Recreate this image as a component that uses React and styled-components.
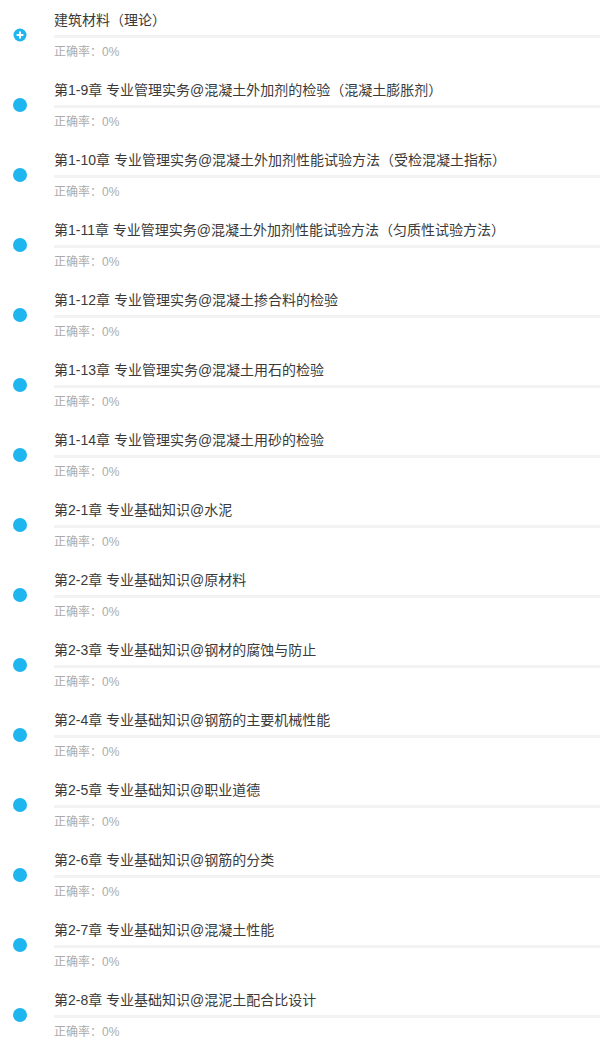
import React from 'react';
import styled, {createGlobalStyle} from 'styled-components';

const GlobalStyle = createGlobalStyle`
    body {
        margin: 0;
        background: #fff;
        font-family: "Liberation Sans", "Noto Sans CJK SC", sans-serif;
    }
`;

const accent = '#1fb5ef';

const chapters = [
    '第1-9章 专业管理实务@混凝土外加剂的检验（混凝土膨胀剂）',
    '第1-10章 专业管理实务@混凝土外加剂性能试验方法（受检混凝土指标）',
    '第1-11章 专业管理实务@混凝土外加剂性能试验方法（匀质性试验方法）',
    '第1-12章 专业管理实务@混凝土掺合料的检验',
    '第1-13章 专业管理实务@混凝土用石的检验',
    '第1-14章 专业管理实务@混凝土用砂的检验',
    '第2-1章 专业基础知识@水泥',
    '第2-2章 专业基础知识@原材料',
    '第2-3章 专业基础知识@钢材的腐蚀与防止',
    '第2-4章 专业基础知识@钢筋的主要机械性能',
    '第2-5章 专业基础知识@职业道德',
    '第2-6章 专业基础知识@钢筋的分类',
    '第2-7章 专业基础知识@混凝土性能',
    '第2-8章 专业基础知识@混泥土配合比设计',
];

const List = styled.div`
    display: flex;
    flex-direction: column;
`;

const Row = styled.div`
    display: flex;
    align-items: flex-start;
    height: 70px;
    padding-top: 10px;
    box-sizing: border-box;
`;

const Marker = styled.div`
    width: 54px;
    height: 50px;
    flex-shrink: 0;
    display: flex;
    align-items: center;
    justify-content: center;
    padding-right: 14px;
    box-sizing: border-box;
`;

const Dot = styled.span`
    width: 14px;
    height: 14px;
    border-radius: 50%;
    background: ${accent};
`;

const Body = styled.div`
    flex: 1 1 auto;
    display: flex;
    flex-direction: column;
`;

const Title = styled.div`
    font-size: 14px;
    line-height: 20px;
    color: #3a3a3a;
    white-space: nowrap;
    padding-bottom: 5px;
    border-bottom: 3px solid #f3f3f3;
`;

const Rate = styled.div`
    font-size: 12px;
    line-height: 20px;
    color: #ababab;
    padding-top: 4px;
`;

const PlusDot = () => (
    <svg width="14" height="14" viewBox="0 0 14 14">
        <circle cx="7" cy="7" r="6.5" fill={accent}/>
        <path d="M7 3.6v6.8M3.6 7h6.8" stroke="#fff" strokeWidth="2"/>
    </svg>
);

const Item = ({title, root}) => (
    <Row>
        <Marker>{root ? <PlusDot/> : <Dot/>}</Marker>
        <Body>
            <Title>{title}</Title>
            <Rate>正确率：0%</Rate>
        </Body>
    </Row>
);

const App = () => (
    <>
        <GlobalStyle/>
        <List>
            <Item title="建筑材料（理论）" root/>
            {chapters.map((c) => <Item key={c} title={c}/>)}
        </List>
    </>
);

export default App;
